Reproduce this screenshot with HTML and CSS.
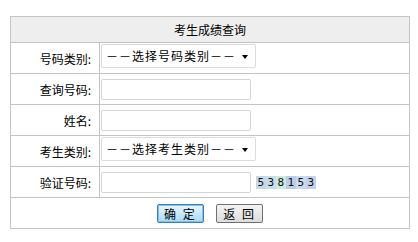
FILE: index.html
```html
<!DOCTYPE html>
<html lang="zh-CN">
<head>
    <meta charset="UTF-8">
    <title>考生成绩查询</title>
    <link rel="stylesheet" href="styles.css">
</head>
<body>
    <form class="query-form">
        <table class="query-table">
            <tr class="head-row">
                <td colspan="2">考生成绩查询</td>
            </tr>
            <tr>
                <td class="label">号码类别:</td>
                <td class="field">
                    <div class="select-box">
                        <select>
                            <option>－－选择号码类别－－</option>
                        </select>
                    </div>
                </td>
            </tr>
            <tr>
                <td class="label">查询号码:</td>
                <td class="field"><input type="text" class="text-input"></td>
            </tr>
            <tr>
                <td class="label">姓名:</td>
                <td class="field"><input type="text" class="text-input"></td>
            </tr>
            <tr>
                <td class="label">考生类别:</td>
                <td class="field">
                    <div class="select-box">
                        <select>
                            <option>－－选择考生类别－－</option>
                        </select>
                    </div>
                </td>
            </tr>
            <tr>
                <td class="label">验证号码:</td>
                <td class="field">
                    <input type="text" class="text-input">
                    <span class="captcha">
                        <span class="c1">5</span><span class="c2">3</span><span class="c3">8</span><span class="c4">1</span><span class="c5">5</span><span class="c6">3</span>
                    </span>
                </td>
            </tr>
            <tr class="btn-row">
                <td colspan="2">
                    <button type="button" class="btn btn-ok">确 定</button>
                    <button type="button" class="btn">返 回</button>
                </td>
            </tr>
        </table>
    </form>
</body>
</html>
```

FILE: styles.css
```css
body {
    margin: 0;
    font-family: "Noto Sans CJK SC", "Liberation Sans", sans-serif;
    font-size: 12px;
    color: #000;
    background: #fff;
}
.query-form {
    padding: 16px 0 0 10px;
}
.query-table {
    width: 400px;
    border-collapse: collapse;
}
.query-table td {
    border: 1px solid #c4c4c4;
    height: 30px;
    padding: 0;
    vertical-align: middle;
}
.head-row td {
    height: 25px;
    background-color: #eeeeee;
    text-align: center;
}
.label {
    width: 80px;
    text-align: right;
    padding-right: 8px !important;
}
.field {
    padding-left: 1px !important;
}
.select-box {
    position: relative;
    width: 155px;
    height: 24px;
    margin-top: -5px;
}
.select-box select {
    -webkit-appearance: none;
    appearance: none;
    width: 155px;
    height: 24px;
    border: 1px solid #dcdcdc;
    border-radius: 2px;
    background: #fff;
    font-family: inherit;
    font-size: 12px;
    padding: 0 0 0 4px;
    color: #000;
    letter-spacing: 1px;
}
.select-box::after {
    content: "";
    position: absolute;
    right: 8px;
    top: 11px;
    border-left: 3.5px solid transparent;
    border-right: 3.5px solid transparent;
    border-top: 4px solid #000;
    pointer-events: none;
}
.text-input {
    width: 150px;
    height: 21px;
    box-sizing: border-box;
    border: 1px solid #d6d6d6;
    border-radius: 2px;
    padding: 0 2px;
    margin: 0;
    vertical-align: middle;
}
.captcha {
    display: inline-flex;
    vertical-align: middle;
    margin-left: 2px;
    height: 13px;
    font-family: "DejaVu Sans Mono", monospace;
    font-size: 11px;
    line-height: 13px;
    color: #111;
}
.captcha span {
    width: 9px;
    text-align: center;
    padding: 0 0.5px;
}
.c1 { background: #c6d8e8; }
.c2 { background: #c8dcea; }
.c3 { background: #cdeadb; }
.c4 { background: #bccde8; }
.c5 { background: #c9d9ee; }
.c6 { background: #c2d2ea; }
.btn-row td {
    text-align: center;
    padding-left: 0;
}
.btn {
    height: 19px;
    padding: 0 6px;
    margin: 0 5px;
    border: 1px solid #707070;
    border-radius: 2px;
    background: linear-gradient(#f4f4f4, #dcdcdc);
    font-family: inherit;
    font-size: 12px;
    line-height: 17px;
    color: #000;
    letter-spacing: 2px;
}
.btn-ok {
    border-color: #3c7fb1;
    background: linear-gradient(#eaf6fd, #a7d9f5);
    box-shadow: inset 0 0 0 1px #7cc4ee;
}
```
